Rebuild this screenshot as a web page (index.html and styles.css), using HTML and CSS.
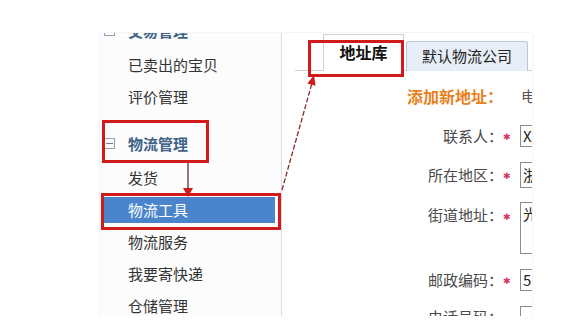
FILE: index.html
```html
<!DOCTYPE html>
<html lang="zh-CN">
<head>
<meta charset="utf-8">
<title>物流工具</title>
<link rel="stylesheet" href="styles.css">
</head>
<body>
<div class="shot">
  <aside class="side">
    <div class="group first">
      <div class="ghead"><span class="fold"></span>交易管理</div>
      <div class="item">已卖出的宝贝</div>
      <div class="item">评价管理</div>
    </div>
    <div class="group">
      <div class="ghead"><span class="fold"></span>物流管理</div>
      <div class="item">发货</div>
      <div class="item active">物流工具</div>
      <div class="item">物流服务</div>
      <div class="item">我要寄快递</div>
      <div class="item">仓储管理</div>
    </div>
  </aside>
  <main class="panel">
    <div class="tabs">
      <div class="tab on">地址库</div>
      <div class="tab">默认物流公司</div>
    </div>
    <div class="form">
      <div class="title">添加新地址：</div>
      <div class="star-cell"></div>
      <div class="plain">电话号码</div>

      <div class="label">联系人：</div>
      <div class="star-cell"><span class="star">✱</span></div>
      <div class="box">XX</div>

      <div class="label">所在地区：</div>
      <div class="star-cell"><span class="star">✱</span></div>
      <div class="box sel">浙江省</div>

      <div class="label top">街道地址：</div>
      <div class="star-cell top"><span class="star">✱</span></div>
      <div class="box area">光明路</div>

      <div class="label">邮政编码：</div>
      <div class="star-cell"><span class="star">✱</span></div>
      <div class="box">510000</div>

      <div class="label">电话号码：</div>
      <div class="star-cell"></div>
      <div class="box"></div>
    </div>
  </main>
  <svg class="annot" width="432" height="283" viewBox="0 0 432 283">
    <rect x="3.5" y="88.5" width="104" height="40" fill="none" stroke="#d11a1a" stroke-width="3"/>
    <rect x="2.5" y="161.5" width="177" height="34" fill="none" stroke="#d11a1a" stroke-width="3"/>
    <rect x="209.5" y="8.5" width="93" height="34" fill="none" stroke="#d11a1a" stroke-width="3"/>
    <line x1="88" y1="130" x2="88" y2="156" stroke="#7d4a4a" stroke-width="1.5"/>
    <polygon points="83,155 93,155 88,164" fill="#d11a1a"/>
    <line x1="182" y1="157" x2="212" y2="50" stroke="#8b2a2a" stroke-width="1.3" stroke-dasharray="5 2"/>
    <polygon points="214,42 215.6,52.7 207.4,50.5" fill="#d11a1a"/>
  </svg>
</div>
</body>
</html>
```
FILE: styles.css
```css
html, body {
  margin: 0;
  padding: 0;
  background: #ffffff;
}

body {
  font-family: "Noto Sans CJK SC", "Noto Sans", sans-serif;
  font-size: 15px;
  color: #333;
}

.shot {
  position: relative;
  margin: 33px 0 0 100px;
  width: 432px;
  height: 283px;
  overflow: hidden;
  display: flex;
  background: #fcfcfc;
  box-shadow: 0 0 2px rgba(0, 0, 0, 0.12);
}

.annot {
  position: absolute;
  left: 0;
  top: 0;
  pointer-events: none;
}

.side {
  width: 181px;
  flex: none;
  border-right: 1px solid #dcdcdc;
}

.group {
  margin-bottom: 11px;
}

.group.first {
  margin-top: -22px;
}

.ghead {
  height: 38px;
  display: flex;
  align-items: center;
  padding-left: 4px;
  font-weight: bold;
  color: #3f6488;
}

.fold {
  width: 9px;
  height: 9px;
  border: 1px solid #8ea2b8;
  margin-right: 13px;
  display: flex;
  align-items: center;
  justify-content: center;
}

.fold::after {
  content: "";
  width: 7px;
  height: 1px;
  background: #6a809a;
}

.item {
  height: 32px;
  line-height: 32px;
  padding-left: 28px;
  color: #333;
  white-space: nowrap;
}

.item.active {
  height: 26px;
  line-height: 26px;
  margin: 3px 6px 3px 2px;
  padding-left: 26px;
  background: #4a85cc;
  color: #ffffff;
}

.panel {
  flex: 1;
  min-width: 0;
  overflow: hidden;
  background: #ffffff;
}

.tabs {
  margin-left: 13px;
  padding-left: 28px;
  padding-top: 1px;
  height: 36px;
  border-bottom: 1px solid #cfcfcf;
  display: flex;
  align-items: flex-end;
  white-space: nowrap;
}

.tab {
  height: 29px;
  width: 120px;
  margin-left: 2px;
  margin-bottom: -1px;
  border: 1px solid #b9c7d8;
  border-bottom: none;
  border-radius: 3px 3px 0 0;
  background: #e8eef7;
  color: #222;
  text-align: center;
  line-height: 28px;
  flex: none;
}

.tab.on {
  width: 79px;
  height: 36px;
  margin-left: 0;
  border-color: #cfcfcf;
  border-radius: 0;
  background: #ffffff;
  font-weight: bold;
  font-size: 16px;
  line-height: 34px;
  color: #111;
}

.form {
  padding-top: 11px;
  display: grid;
  grid-template-columns: 221px 17px 200px;
  row-gap: 14px;
  align-items: center;
  white-space: nowrap;
}

.title {
  height: 28px;
  line-height: 28px;
  text-align: right;
  font-size: 16px;
  font-weight: bold;
  color: #e8801c;
}

.plain {
  padding-left: 1px;
  color: #555;
  line-height: 28px;
}

.label {
  text-align: right;
  color: #4a4a4a;
  line-height: 22px;
}

.label.top {
  align-self: start;
  line-height: 26px;
}

.star-cell {
  line-height: 22px;
}

.star-cell.top {
  align-self: start;
  line-height: 26px;
}

.star {
  font-family: "DejaVu Sans", sans-serif;
  font-size: 9px;
  color: #d6345a;
  vertical-align: middle;
}

.box {
  height: 20px;
  border: 1px solid #8c8c8c;
  padding-left: 2px;
  line-height: 20px;
  color: #222;
  background: #fff;
}

.box.sel {
  height: 24px;
  line-height: 24px;
}

.box.area {
  height: 50px;
  line-height: 22px;
  align-self: start;
}
```
